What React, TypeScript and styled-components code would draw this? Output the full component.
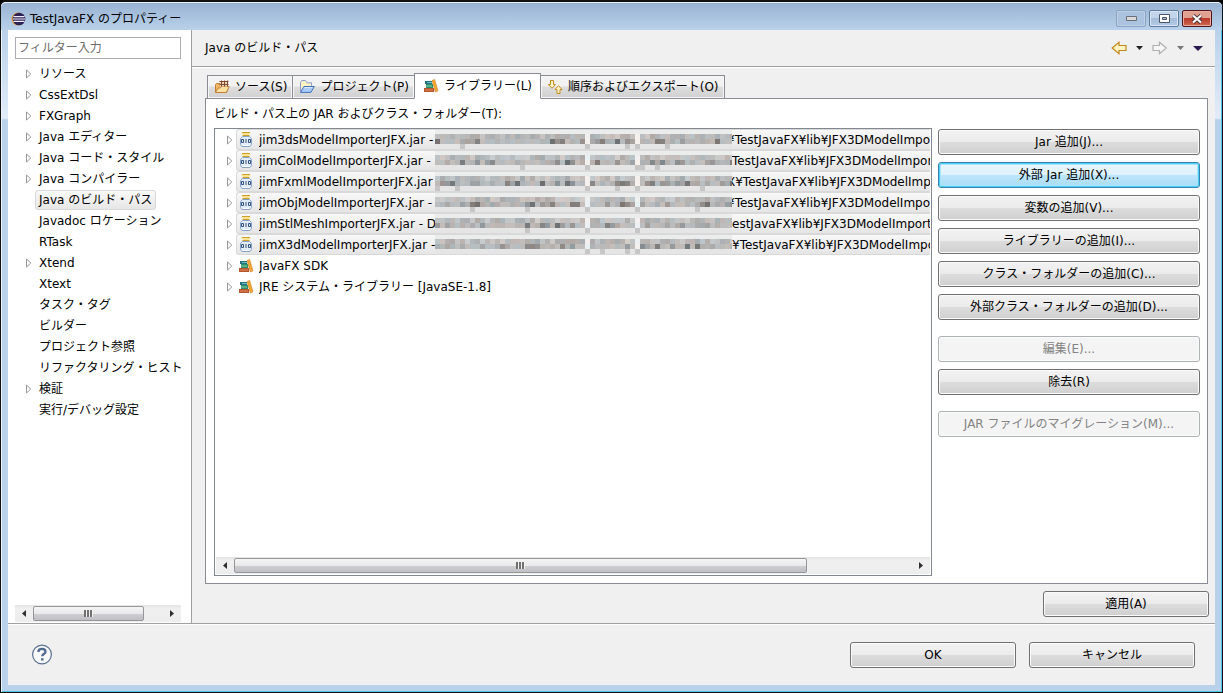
import React from "react";
import styled, { createGlobalStyle, css } from "styled-components";

const GlobalStyle = createGlobalStyle`
  * { box-sizing: border-box; }
  body { margin: 0; background: #000; }
  body, button, input {
    font-family: "DejaVu Sans", "Noto Sans CJK JP", sans-serif;
    font-size: 12px;
    line-height: 20px;
    color: #000;
  }
  button, ul, li { margin: 0; padding: 0; }
  ul { list-style: none; }
  svg { display: block; flex: none; }
`;

const Window = styled.div`
  display: flex;
  flex-direction: column;
  height: 100vh;
  min-height: 560px;
  padding: 0 7px 7px;
  border: 1px solid #111;
  border-top-width: 2px;
  border-radius: 6px 6px 0 0;
  box-shadow: inset 1px 1px 0 #eef6fd, inset -1px -1px 0 #4cc5e8;
  background: linear-gradient(#98b3d2 0, #b9d1ea 28px, #e2ecf8 116px, #b9d1ea 118px);
`;

const TitleBar = styled.header`
  display: flex;
  align-items: center;
  flex: none;
  gap: 4px;
  height: 28px;
  margin: 0 -7px;
  padding: 4px 10px 0 10px;
  border-top: 1px solid #e4effa;
  background: linear-gradient(#98b3d2, #b9d1ea);
  border-radius: 5px 5px 0 0;
`;

const Title = styled.h1`
  flex: 1;
  margin: 0;
  font-size: 12px;
  font-weight: normal;
`;

const CaptionButtons = styled.div`
  display: flex;
  gap: 3px;
`;

const CaptionButton = styled.button<{ $tone?: "dim" | "close" }>`
  display: flex;
  align-items: center;
  justify-content: center;
  width: 30px;
  height: 17px;
  border: 1px solid #5f7b9c;
  border-radius: 2px;
  box-shadow: inset 0 0 0 1px #d8e6f5;
  background: linear-gradient(#c3d5ea 50%, #a5bdd9 50%, #b4cae4);
  ${(p) => p.$tone === "dim" && css`
    border-color: #8ba4c1;
    box-shadow: inset 0 0 0 1px #bdd0e6;
    background: #abc3df;
  `}
  ${(p) => p.$tone === "close" && css`
    border-color: #4f1416;
    box-shadow: inset 0 0 0 1px #e9aba2;
    background: linear-gradient(#e0a092 45%, #b9392a 50%, #cf6a50);
  `}
`;

const Client = styled.div`
  display: flex;
  flex: 1;
  min-height: 0;
  background: #f0f0f0;
`;

const Sidebar = styled.nav`
  display: flex;
  flex-direction: column;
  flex: none;
  width: 184px;
  padding: 7px 10px 1px 7px;
  border-right: 1px solid #a0a0a0;
  background: #fff;
`;

const FilterBox = styled.input`
  flex: none;
  height: 22px;
  margin-bottom: 4px;
  padding: 0 2px;
  border: 1px solid #abadb3;
  background: #fff;
  outline: none;
  &::placeholder { color: #6d6d6d; opacity: 1; }
`;

const NavTree = styled.ul`
  flex: 1;
  min-height: 0;
  margin-right: -8px;
  overflow: hidden;
`;

const NavItem = styled.li`
  display: flex;
  align-items: center;
  height: 21px;
  padding-left: 10px;
`;

const Twisty = styled.span`
  flex: none;
  width: 10px;
`;

const NavLabel = styled.a<{ $selected?: boolean }>`
  padding: 0 3px;
  border: 1px solid transparent;
  border-radius: 3px;
  line-height: 18px;
  color: #000;
  text-decoration: none;
  white-space: nowrap;
  ${(p) => p.$selected && css`
    border-color: #d9d9d9;
    background: linear-gradient(#fafafa, #e6e6e6);
  `}
`;

const ScrollBar = styled.div`
  display: flex;
  flex: none;
  height: 17px;
  background: linear-gradient(#e3e3e3, #f0f0f0 4px, #ededed);
`;

const ScrollArrow = styled.button`
  display: flex;
  align-items: center;
  justify-content: center;
  width: 18px;
  border: 0;
  background: none;
`;

const ScrollTrack = styled.div`
  flex: 1;
  padding: 1px 0;
`;

const ScrollThumb = styled.div<{ $size: number }>`
  display: flex;
  align-items: center;
  justify-content: center;
  width: ${(p) => p.$size}%;
  height: 15px;
  border: 1px solid #979797;
  border-radius: 2px;
  background: linear-gradient(#f5f5f5, #e9e9eb 50%, #d0d0d3 50%, #c0c0c4);
`;

const Page = styled.main`
  display: flex;
  flex: 1;
  flex-direction: column;
  min-width: 0;
`;

const PageHeader = styled.div`
  display: flex;
  align-items: center;
  justify-content: space-between;
  flex: none;
  height: 37px;
  padding: 0 12px 0 13px;
  border-bottom: 1px solid #a0a0a0;
  box-shadow: 0 1px 0 #fff;
`;

const PageTitle = styled.h2`
  margin: 0;
  font-size: 12px;
  font-weight: normal;
`;

const HistoryBar = styled.div`
  display: flex;
  align-items: center;
  gap: 9px;
`;

const ToolButton = styled.button`
  display: flex;
  padding: 0;
  border: 0;
  background: none;
`;

const PageBody = styled.div`
  display: flex;
  flex: 1;
  flex-direction: column;
  min-height: 0;
  padding: 6px 6px 6px 13px;
`;

const TabStrip = styled.div`
  display: flex;
  align-items: flex-end;
  flex: none;
  height: 26px;
  margin-bottom: -1px;
  padding-left: 2px;
`;

const Tab = styled.button<{ $active?: boolean }>`
  display: flex;
  align-items: center;
  gap: 5px;
  height: 24px;
  margin-right: -1px;
  padding: 0 5px 0 6px;
  border: 1px solid #898c95;
  box-shadow: inset 0 0 0 1px #f6f6f6;
  background: linear-gradient(#f2f2f2 45%, #dedede 50%, #d0d0d0);
  white-space: nowrap;
  ${(p) => p.$active && css`
    position: relative;
    height: 26px;
    padding: 0 8px;
    border-bottom-color: #fff;
    background: #fff;
    box-shadow: none;
  `}
`;

const TabPanel = styled.section`
  display: flex;
  flex: 1;
  gap: 6px;
  min-height: 0;
  margin-right: 1px;
  padding: 5px 7px 7px 8px;
  border: 1px solid #898c95;
  background: #fff;
`;

const ListColumn = styled.div`
  display: flex;
  flex: 1;
  flex-direction: column;
  min-width: 0;
`;

const ListLabel = styled.div`
  flex: none;
  height: 24px;
`;

const ListBox = styled.div`
  display: flex;
  flex: 1;
  flex-direction: column;
  min-height: 0;
  padding: 0 1px 1px;
  border: 1px solid #828790;
`;

const EntryTree = styled.ul`
  flex: 1;
  min-height: 0;
  overflow: hidden;
`;

const Entry = styled.li`
  display: flex;
  align-items: center;
  height: 21px;
  padding-left: 10px;
`;

const EntryBody = styled.div<{ $selected?: boolean }>`
  display: flex;
  align-items: center;
  flex: 1;
  min-width: 0;
  height: 21px;
  padding-left: 1px;
  border: 1px solid transparent;
  border-right: 0;
  overflow: hidden;
  white-space: pre;
  ${(p) => p.$selected && css`
    border-color: #d9d9d9;
    border-radius: 3px 0 0 3px;
    background: linear-gradient(#f8f8f8, #e5e5e5);
  `}
`;

const EntryName = styled.span<{ $clipped?: boolean }>`
  flex: none;
  margin-left: 5px;
  overflow: hidden;
  ${(p) => p.$clipped && css`width: 176px;`}
`;

const MosaicStrip = styled.svg`
  position: relative;
`;

const EntryPath = styled.span<{ $tucked?: boolean }>`
  flex: 1;
  min-width: 0;
  margin-left: ${(p) => (p.$tucked ? "-5px" : "0")};
  overflow: hidden;
`;

const ButtonColumn = styled.div`
  display: flex;
  flex: none;
  flex-direction: column;
  gap: 7px;
  width: 262px;
  padding-top: 25px;
`;

const PushButton = styled.button<{ $hot?: boolean; $gapBefore?: boolean }>`
  flex: none;
  height: 26px;
  margin-top: ${(p) => (p.$gapBefore ? "9px" : "0")};
  border: 1px solid #707070;
  border-radius: 3px;
  box-shadow: inset 0 0 0 1px #fbfbfb;
  background: linear-gradient(#f2f2f2, #ebebeb 50%, #dddddd 50%, #cfcfcf);
  ${(p) => p.$hot && css`
    border-color: #3c7fb1;
    box-shadow: inset 0 0 0 1px #48d0f8, inset 0 0 0 2px #a5e4fb;
    background: linear-gradient(#eaf6fd, #dcf1fc 50%, #bee6fd 50%, #a9dbf5);
  `}
  &:disabled {
    border-color: #adb2b5;
    background: #f4f4f4;
    color: #838383;
  }
`;

const ApplyRow = styled.div`
  display: flex;
  justify-content: flex-end;
  flex: none;
  padding-top: 7px;
`;

const Footer = styled.footer`
  display: flex;
  align-items: center;
  flex: none;
  gap: 13px;
  height: 62px;
  padding: 0 20px 0 23px;
  border-top: 1px solid #a0a0a0;
  box-shadow: inset 0 1px 0 #fff;
  background: #f0f0f0;
`;

const Spacer = styled.div`
  flex: 1;
`;

const DialogButton = styled(PushButton)`
  width: 166px;
`;

const EclipseIcon = () => (
  <svg width="15" height="14" viewBox="0 0 15 14">
    <circle cx="7" cy="7" r="6.5" fill="#e59b3c" />
    <circle cx="8" cy="7" r="6.3" fill="#2c2255" />
    <path d="M2.5 4.6h11M2 7h12M2.5 9.4h11" stroke="#f2effa" strokeWidth="1.2" />
  </svg>
);

const TwistyIcon = () => (
  <svg width="7" height="10" viewBox="0 0 7 10">
    <path d="M1.5 1v8L5.8 5z" fill="#fff" stroke="#989898" />
  </svg>
);

const SourceIcon = () => (
  <svg width="16" height="16" viewBox="0 0 16 16">
    <path d="M1.5 13V5.5l1-1h3.5v2h7V13z" fill="#f0b968" stroke="#c07f35" />
    <path d="M1.3 13.5l2.9-4.5h2l1.4-1.5h7.6l-2.8 6z" fill="#fce0a0" stroke="#c07f35" />
    <path d="M6 2h8v5.5H6z" fill="#efd2b4" />
    <path d="M5.5 2.5h9M5.5 5.5h9M7.5 1.5v6M10.5 1.5v6M13.5 1.5v6" stroke="#7c4a30" />
  </svg>
);

const FolderIcon = () => (
  <svg width="16" height="16" viewBox="0 0 16 16">
    <path d="M1.5 12.5V3.6l1.4-2.1h3.6l1.6 2.3h4.4v3" fill="#fdf2c4" stroke="#8a9cc8" />
    <path d="M1.5 13.4l3.4-5.9h10.4l-3.4 5.9z" fill="#a9cbf6" stroke="#4470c0" />
    <path d="M5.4 8.6h8" stroke="#dcebff" />
  </svg>
);

const LibraryIcon = () => (
  <svg width="16" height="16" viewBox="0 0 16 16">
    <path d="M2 3h7v3H2z" fill="#25707f" />
    <path d="M4 4.5h5" stroke="#6fc0c4" />
    <path d="M3 6h7v4H3z" fill="#2f8f6a" />
    <path d="M3 8h6" stroke="#86cfa6" />
    <path d="M1 10h10v4H1z" fill="#b5562c" />
    <path d="M2 12h8" stroke="#e08a5c" />
    <path d="M9 2.6l2.6-1.2L15 12.8l-2.6 1.2z" fill="#f4a632" stroke="#cf7d24" strokeWidth=".6" />
  </svg>
);

const OrderIcon = () => (
  <svg width="16" height="16" viewBox="0 0 16 16" fill="#fff4c8" stroke="#c58b1e">
    <path d="M3.5 1.5h3v4h2L5 9.3 1.3 5.5h2.2z" />
    <path d="M10 14.5h3v-4h2L11.5 6.7 8 10.5h2z" />
  </svg>
);

const JarIcon = () => (
  <svg width="16" height="17" viewBox="0 0 16 17">
    <path d="M4.5 5.5h7l2 2v6l-1.5 2H4l-1.5-2v-6z" fill="#e2edfa" stroke="#86a3cc" />
    <path d="M4 1.5h8M4.5 4.5h7" stroke="#cf9f2c" />
    <path d="M3.5 2.5h9M5 3.5h6" stroke="#fae493" />
    <path d="M3.5 8.5h2v3h-2zM8 8v4M10.5 8.5h2v3h-2z" fill="none" stroke="#34507e" />
    <path d="M4.5 14.5h7" stroke="#fff" />
  </svg>
);

const HistoryArrow = ({ forward = false }: { forward?: boolean }) => (
  <svg width="16" height="14" viewBox="0 0 16 14">
    <path
      d={forward ? "M1 4.5h6.5V1.3L14.3 7l-6.8 5.7V9.5H1z" : "M15 4.5H8V1.3L1.2 7 8 12.7V9.5h7z"}
      fill={forward ? "#f6f6f6" : "#fff3c4"}
      stroke={forward ? "#b0b0b0" : "#c08a1c"}
      strokeWidth="1.2"
    />
  </svg>
);

const Caret = ({ color, wide = false }: { color: string; wide?: boolean }) => (
  <svg width={wide ? 10 : 7} height={wide ? 5 : 4} viewBox="0 0 9 5" preserveAspectRatio="none">
    <path d="M0 0h9L4.5 5z" fill={color} />
  </svg>
);

const HelpIcon = () => (
  <svg width="22" height="22" viewBox="0 0 22 22" fill="none">
    <circle cx="11" cy="10.5" r="9.4" fill="#f7f9fb" stroke="#5a7092" strokeWidth="1.2" />
    <path d="M7.4 7.9c0-2 1.6-3 3.6-3s3.5 1 3.5 2.8c0 2.3-3.3 2.4-3.3 4.6" stroke="#506a90" strokeWidth="2.3" />
    <path d="M10 14.2h2.5v2.3H10z" fill="#506a90" />
  </svg>
);

const ScrollGlyph = ({ right = false }: { right?: boolean }) => (
  <svg width="4" height="7" viewBox="0 0 4 7">
    <path d={right ? "M0 0v7l4-3.5z" : "M4 0v7L0 3.5z"} fill="#303030" />
  </svg>
);

const HorizontalScroll = ({ size }: { size: number }) => (
  <ScrollBar>
    <ScrollArrow aria-label="左へスクロール"><ScrollGlyph /></ScrollArrow>
    <ScrollTrack>
      <ScrollThumb $size={size}>
        <svg width="9" height="7" viewBox="0 0 9 7">
          <path d="M1 0v7M4 0v7M7 0v7" stroke="#707070" strokeWidth="2" />
          <path d="M2.5 0v7M5.5 0v7M8.5 0v7" stroke="#f4f4f4" />
        </svg>
      </ScrollThumb>
    </ScrollTrack>
    <ScrollArrow aria-label="右へスクロール"><ScrollGlyph right /></ScrollArrow>
  </ScrollBar>
);

const noise = (n: number) => {
  const v = Math.sin(n * 12.9898) * 43758.5453;
  return v - Math.floor(v);
};

/* Pixelated strip that hides the private part of each path. */
const Mosaic = ({ seed }: { seed: number }) => {
  const cells: React.ReactNode[] = [];
  for (let c = 0; c < 60; c++) {
    const gap = c === 30 || c === 40;
    for (let r = 0; r < 3; r++) {
      const k = noise(seed * 331 + c * 7 + r * 97);
      let level = 205 - k * 35;
      if (r === 1) level = 190 - k * k * k * 80;
      if (r === 2) level = gap || k > 0.94 ? 198 : 229;
      if (gap && r < 2) level = 240;
      const tint = r < 2 ? (noise(c * 3 + seed * 17 + r) - 0.5) * 18 : 0;
      cells.push(
        <rect
          key={`${c}-${r}`}
          x={c * 5}
          y={r * 5 + 4}
          width="5"
          height="5"
          fill={`rgb(${Math.round(level + tint)},${Math.round(level)},${Math.round(level - tint / 2)})`}
        />
      );
    }
  }
  return (
    <MosaicStrip width="297" height="19" viewBox="0 0 297 19" shapeRendering="crispEdges" aria-hidden="true">
      <path d="M0 0h297v19H0z" fill="#ebecec" />
      {cells}
    </MosaicStrip>
  );
};

const navItems: { label: string; expandable?: boolean; selected?: boolean }[] = [
  { label: "リソース", expandable: true },
  { label: "CssExtDsl", expandable: true },
  { label: "FXGraph", expandable: true },
  { label: "Java エディター", expandable: true },
  { label: "Java コード・スタイル", expandable: true },
  { label: "Java コンパイラー", expandable: true },
  { label: "Java のビルド・パス", selected: true },
  { label: "Javadoc ロケーション" },
  { label: "RTask" },
  { label: "Xtend", expandable: true },
  { label: "Xtext" },
  { label: "タスク・タグ" },
  { label: "ビルダー" },
  { label: "プロジェクト参照" },
  { label: "リファクタリング・ヒスト" },
  { label: "検証", expandable: true },
  { label: "実行/デバッグ設定" },
];

const jars: { name: string; path: string; tucked?: boolean }[] = [
  { name: "jim3dsModelImporterJFX.jar -", path: "¥TestJavaFX¥lib¥JFX3DModelImpor", tucked: true },
  { name: "jimColModelImporterJFX.jar -", path: "TestJavaFX¥lib¥JFX3DModelImpor" },
  { name: "jimFxmlModelImporterJFX.jar", path: "X¥TestJavaFX¥lib¥JFX3DModelImp", tucked: true },
  { name: "jimObjModelImporterJFX.jar -", path: "¥TestJavaFX¥lib¥JFX3DModelImpor", tucked: true },
  { name: "jimStlMeshImporterJFX.jar - D", path: "estJavaFX¥lib¥JFX3DModelImport" },
  { name: "jimX3dModelImporterJFX.jar -", path: "¥TestJavaFX¥lib¥JFX3DModelImpo" },
];

const libraries = ["JavaFX SDK", "JRE システム・ライブラリー [JavaSE-1.8]"];

const actions: { label: string; hot?: boolean; disabled?: boolean; gapBefore?: boolean }[] = [
  { label: "Jar 追加(J)..." },
  { label: "外部 Jar 追加(X)...", hot: true },
  { label: "変数の追加(V)..." },
  { label: "ライブラリーの追加(I)..." },
  { label: "クラス・フォルダーの追加(C)..." },
  { label: "外部クラス・フォルダーの追加(D)..." },
  { label: "編集(E)...", disabled: true, gapBefore: true },
  { label: "除去(R)" },
  { label: "JAR ファイルのマイグレーション(M)...", disabled: true, gapBefore: true },
];

export default function App() {
  return (
    <>
      <GlobalStyle />
      <Window>
        <TitleBar>
          <EclipseIcon />
          <Title>TestJavaFX のプロパティー</Title>
          <CaptionButtons>
            <CaptionButton $tone="dim" aria-label="最小化">
              <svg width="11" height="5" viewBox="0 0 11 5"><path d="M.5.5h10v4H.5z" fill="#d9d9d9" stroke="#6a7078" /></svg>
            </CaptionButton>
            <CaptionButton aria-label="最大化">
              <svg width="11" height="9" viewBox="0 0 11 9"><path d="M.5.5h10v8H.5z" fill="#fff" stroke="#4d5566" /><path d="M3.5 3.5h4v2h-4z" fill="#a9bfda" stroke="#4d5566" /></svg>
            </CaptionButton>
            <CaptionButton $tone="close" aria-label="閉じる">
              <svg width="12" height="10" viewBox="0 0 12 10"><path d="M2 1.5l8 7M10 1.5l-8 7" stroke="#4a3038" strokeWidth="4" /><path d="M2 1.5l8 7M10 1.5l-8 7" stroke="#fff" strokeWidth="2.2" /></svg>
            </CaptionButton>
          </CaptionButtons>
        </TitleBar>

        <Client>
          <Sidebar>
            <FilterBox aria-label="フィルター" placeholder="フィルター入力" />
            <NavTree>
              {navItems.map((item) => (
                <NavItem key={item.label}>
                  <Twisty>{item.expandable && <TwistyIcon />}</Twisty>
                  <NavLabel href="#" $selected={item.selected}>{item.label}</NavLabel>
                </NavItem>
              ))}
            </NavTree>
            <HorizontalScroll size={85} />
          </Sidebar>

          <Page>
            <PageHeader>
              <PageTitle>Java のビルド・パス</PageTitle>
              <HistoryBar>
                <ToolButton aria-label="戻る"><HistoryArrow /></ToolButton>
                <ToolButton aria-label="戻る履歴"><Caret color="#222" /></ToolButton>
                <ToolButton aria-label="進む"><HistoryArrow forward /></ToolButton>
                <ToolButton aria-label="進む履歴"><Caret color="#777" /></ToolButton>
                <ToolButton aria-label="メニュー"><Caret color="#2a1a50" wide /></ToolButton>
              </HistoryBar>
            </PageHeader>

            <PageBody>
              <TabStrip role="tablist">
                <Tab role="tab"><SourceIcon />ソース(S)</Tab>
                <Tab role="tab"><FolderIcon />プロジェクト(P)</Tab>
                <Tab role="tab" aria-selected="true" $active><LibraryIcon />ライブラリー(L)</Tab>
                <Tab role="tab"><OrderIcon />順序およびエクスポート(O)</Tab>
              </TabStrip>
              <TabPanel>
                <ListColumn>
                  <ListLabel id="entries">ビルド・パス上の JAR およびクラス・フォルダー(T):</ListLabel>
                  <ListBox>
                    <EntryTree aria-labelledby="entries">
                      {jars.map((jar, i) => (
                        <Entry key={jar.name}>
                          <Twisty><TwistyIcon /></Twisty>
                          <EntryBody $selected>
                            <JarIcon />
                            <EntryName $clipped>{jar.name}</EntryName>
                            <Mosaic seed={i + 1} />
                            <EntryPath $tucked={jar.tucked}>{jar.path}</EntryPath>
                          </EntryBody>
                        </Entry>
                      ))}
                      {libraries.map((name) => (
                        <Entry key={name}>
                          <Twisty><TwistyIcon /></Twisty>
                          <EntryBody>
                            <LibraryIcon />
                            <EntryName>{name}</EntryName>
                          </EntryBody>
                        </Entry>
                      ))}
                    </EntryTree>
                    <HorizontalScroll size={84.5} />
                  </ListBox>
                </ListColumn>
                <ButtonColumn>
                  {actions.map((a) => (
                    <PushButton key={a.label} disabled={a.disabled} $hot={a.hot} $gapBefore={a.gapBefore}>
                      {a.label}
                    </PushButton>
                  ))}
                </ButtonColumn>
              </TabPanel>
              <ApplyRow>
                <DialogButton>適用(A)</DialogButton>
              </ApplyRow>
            </PageBody>
          </Page>
        </Client>

        <Footer>
          <ToolButton aria-label="ヘルプ"><HelpIcon /></ToolButton>
          <Spacer />
          <DialogButton>OK</DialogButton>
          <DialogButton>キャンセル</DialogButton>
        </Footer>
      </Window>
    </>
  );
}
